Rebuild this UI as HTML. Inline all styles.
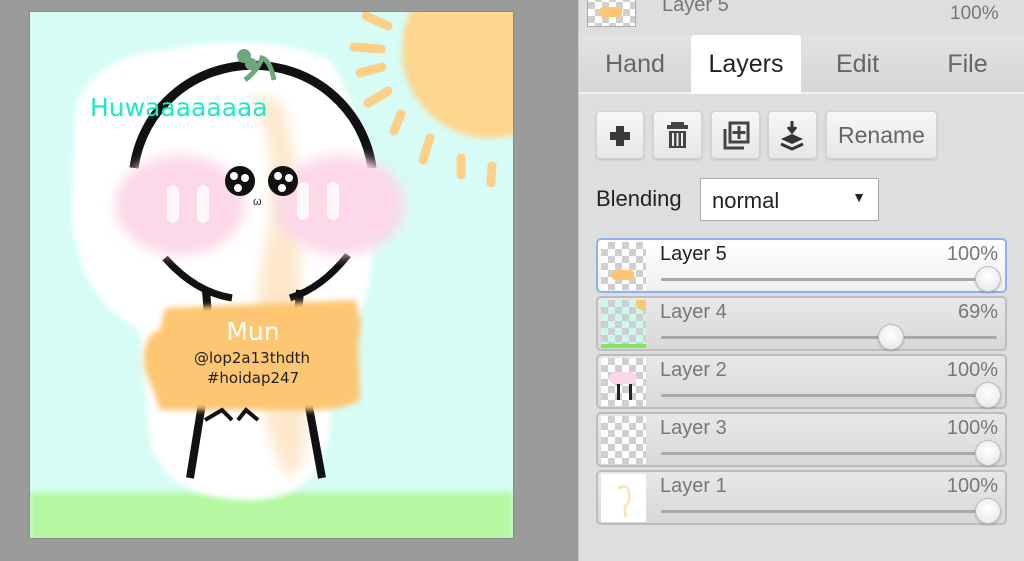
<!DOCTYPE html>
<html><head><meta charset="utf-8"><style>
*{box-sizing:border-box;margin:0;padding:0}
body{width:1024px;height:561px;overflow:hidden;background:#9b9b9b;font-family:"Liberation Sans",Arial,sans-serif;position:relative}
#panel{position:absolute;left:578px;top:0;width:446px;height:561px;background:#dedede;border-left:1px solid #c8c8c8}
.abs{position:absolute}
.chk{background-color:#fff;background-image:linear-gradient(45deg,#cfcfcf 25%,transparent 25%,transparent 75%,#cfcfcf 75%),linear-gradient(45deg,#cfcfcf 25%,transparent 25%,transparent 75%,#cfcfcf 75%);background-size:14px 14px;background-position:0 0,7px 7px}
.tab{position:absolute;top:35px;height:58px;font-size:25px;color:#666;line-height:58px;text-align:center}
.btn{position:absolute;top:111px;height:48px;background:linear-gradient(#f7f7f7,#e6e6e6);border:1px solid #d2d2d2;border-radius:4px;box-shadow:0 1px 2px rgba(0,0,0,.15)}
.row{position:absolute;left:596px;width:411px;height:55px;border:2px solid #bdbdbd;border-radius:5px;background:linear-gradient(#e8e8e8,#d8d8d8)}
.row .th{position:absolute;left:3px;top:2px;width:45px;height:48px}
.row .nm{position:absolute;left:62px;top:3px;font-size:20px;color:#777}
.row .pc{position:absolute;right:7px;top:3px;font-size:20px;color:#777}
.row .ln{position:absolute;left:63px;right:8px;top:38px;height:3px;background:#a8a8a8;border-radius:2px}
.row .kn{position:absolute;top:26px;width:26px;height:26px;border-radius:50%;background:radial-gradient(circle at 50% 40%,#fff,#e4e4e4);border:1px solid #bbb;box-shadow:0 1px 2px rgba(0,0,0,.2)}
</style></head><body>
<svg class="abs" style="left:0;top:0" width="578" height="561">
<defs>
<filter id="b3"><feGaussianBlur stdDeviation="3"/></filter>
<filter id="b6"><feGaussianBlur stdDeviation="6"/></filter>
<clipPath id="cv"><rect x="30" y="12" width="483" height="526"/></clipPath>
</defs>
<rect x="29" y="11" width="485" height="528" fill="#8a8a8a"/>
<g clip-path="url(#cv)">
<rect x="30" y="12" width="483" height="526" fill="#d6fcf5"/>
<rect x="30" y="492" width="483" height="50" fill="#b6f7a1" filter="url(#b3)"/>
<circle cx="490" cy="50" r="88" fill="#fdd68f" filter="url(#b3)"/>
<g stroke="#fdd08a" stroke-width="9" stroke-linecap="round">
<line x1="366" y1="16" x2="388" y2="26"/><line x1="354" y1="47" x2="381" y2="49"/>
<line x1="360" y1="73" x2="382" y2="67"/><line x1="368" y1="103" x2="388" y2="91"/>
<line x1="394" y1="131" x2="401" y2="114"/><line x1="423" y1="160" x2="430" y2="138"/>
<line x1="461" y1="175" x2="461" y2="158"/><line x1="491" y1="183" x2="492" y2="166"/>
</g>
<path d="M75 110 Q90 55 170 50 Q260 30 330 60 Q370 120 372 250 Q370 330 335 320 L330 430 Q320 500 250 500 Q165 500 150 440 L140 330 Q80 300 72 220 Z" fill="#fff" filter="url(#b3)"/>
<path d="M248 95 Q262 110 268 140 Q278 200 262 260 Q250 330 262 400 Q275 470 290 475 Q310 470 305 400 Q300 320 300 240 Q300 150 280 100 Z" fill="#fde8cc" filter="url(#b6)"/>
<path d="M134 168 A120 118 0 0 1 372 168" fill="none" stroke="#111" stroke-width="9"/>
<path d="M165 258 Q195 292 232 298 M290 298 Q322 288 348 255" fill="none" stroke="#111" stroke-width="7"/>
<path d="M245 80 Q258 70 262 58 Q270 60 274 80" fill="none" stroke="#6ea77a" stroke-width="5"/>
<circle cx="244" cy="56" r="7" fill="#6ea77a"/><circle cx="251" cy="64" r="6" fill="#6ea77a"/>
<ellipse cx="180" cy="205" rx="65" ry="50" fill="#fcd8e8" filter="url(#b6)"/>
<ellipse cx="340" cy="205" rx="65" ry="50" fill="#fcd8e8" filter="url(#b6)"/>
<g fill="#fff" opacity=".8"><rect x="167" y="185" width="12" height="38" rx="6"/><rect x="197" y="185" width="12" height="38" rx="6"/><rect x="297" y="182" width="12" height="38" rx="6"/><rect x="327" y="182" width="12" height="38" rx="6"/></g>
<circle cx="240" cy="181" r="15" fill="#111"/><circle cx="283" cy="181" r="15" fill="#111"/>
<g fill="#fff"><circle cx="234" cy="176" r="4"/><circle cx="245" cy="178" r="4"/><circle cx="238" cy="188" r="4"/><circle cx="278" cy="176" r="4"/><circle cx="289" cy="178" r="4"/><circle cx="282" cy="188" r="4"/></g>
<text x="253" y="205" font-size="11" fill="#222" font-family="Liberation Sans">ω</text>
<line x1="206" y1="290" x2="208" y2="315" stroke="#111" stroke-width="8"/><line x1="300" y1="290" x2="298" y2="315" stroke="#111" stroke-width="8"/>
<line x1="205" y1="385" x2="190" y2="478" stroke="#111" stroke-width="8"/><line x1="305" y1="385" x2="322" y2="478" stroke="#111" stroke-width="8"/>
<path d="M165 308 L355 300 Q365 330 358 340 L360 400 Q340 412 300 410 L160 410 Q150 380 145 372 Q140 335 160 330 Z" fill="#fdc672" filter="url(#b3)"/>
<path d="M205 420 L222 410 L232 420 M238 420 L246 410 L258 420" fill="none" stroke="#111" stroke-width="4"/>
<text x="253" y="340" text-anchor="middle" font-size="25" fill="#fff" font-family="DejaVu Sans">Mun</text>
<text x="252" y="363" text-anchor="middle" font-size="15" fill="#222" font-family="DejaVu Sans">@lop2a13thdth</text>
<text x="253" y="383" text-anchor="middle" font-size="15" fill="#222" font-family="DejaVu Sans">#hoidap247</text>
<text x="90" y="116" font-size="25" fill="#1ee8c8" font-family="DejaVu Sans">Huwaaaaaaaa</text>
</g>
</svg>
<div id="panel"></div>
<div class="abs chk" style="left:587px;top:-20px;width:49px;height:47px;border:1px solid #aaa"><div style="position:absolute;left:12px;top:26px;width:22px;height:10px;background:#fdc672;border-radius:3px"></div></div>
<div class="abs" style="left:662px;top:-6px;font-size:20px;color:#777">Layer 5</div>
<div class="abs" style="left:950px;top:3px;font-size:19px;color:#777">100%</div>
<div class="abs" style="left:579px;top:35px;width:445px;height:58px;background:linear-gradient(#e2e2e2,#d6d6d6)"></div>
<div class="abs" style="left:579px;top:92px;width:445px;height:2px;background:#f4f4f4"></div>
<div class="tab" style="left:590px;width:90px">Hand</div>
<div class="tab" style="left:691px;width:110px;background:#fff;border-radius:4px 4px 0 0;color:#222;height:59px">Layers</div>
<div class="tab" style="left:815px;width:85px">Edit</div>
<div class="tab" style="left:925px;width:85px">File</div>
<div class="btn" style="left:596px;width:48px"><svg width="46" height="46"><path d="M19 14h8v6h6v8h-6v6h-8v-6h-6v-8h6z" fill="#3a3a3a"/></svg></div>
<div class="btn" style="left:653px;width:49px"><svg width="47" height="46"><rect x="17" y="10" width="13" height="3" fill="#444"/><rect x="13" y="13" width="21" height="4" fill="#444"/><path d="M15 19h17v17H15z" fill="#444"/><path d="M19 21v13M23.5 21v13M28 21v13" stroke="#eee" stroke-width="2"/></svg></div>
<div class="btn" style="left:711px;width:49px"><svg width="47" height="46"><path d="M13 17v19h19" fill="none" stroke="#444" stroke-width="3"/><rect x="18" y="11" width="18" height="19" fill="none" stroke="#444" stroke-width="3"/><path d="M27 14v13M20.5 20.5h13" stroke="#444" stroke-width="3"/></svg></div>
<div class="btn" style="left:768px;width:49px"><svg width="47" height="46"><path d="M23 9v9M19 15l4 5 4-5" stroke="#333" stroke-width="3" fill="none"/><path d="M12 27l11-5 11 5-11 5z" fill="#333"/><path d="M12 32l11 5 11-5" stroke="#333" stroke-width="3" fill="none"/></svg></div>
<div class="btn" style="left:826px;width:111px;font-size:23px;color:#666;line-height:46px;text-align:center">Rename</div>
<div class="abs" style="left:596px;top:186px;font-size:22px;color:#222">Blending</div>
<div class="abs" style="left:700px;top:178px;width:179px;height:43px;background:#fff;border:1px solid #aaa;font-size:22px;color:#222;padding:9px 0 0 11px">normal<span style="position:absolute;right:12px;top:10px;font-size:14px">▼</span></div>
<div class="row" style="top:238px;border-color:#8fb0e8;background:linear-gradient(#fff,#f0f0f0)"><div class="th chk"><div style="position:absolute;left:11px;top:28px;width:22px;height:10px;background:#fdc672;border-radius:3px"></div></div><div class="nm" style="color:#222">Layer 5</div><div class="pc">100%</div><div class="ln"></div><div class="kn" style="left:377px"></div></div>
<div class="row" style="top:296px"><div class="th chk" style="background-color:#c8f8ef"><div style="position:absolute;left:0;bottom:0;width:45px;height:4px;background:#7ee860"></div><div style="position:absolute;right:0;top:0;width:10px;height:10px;background:#fdc672;border-radius:0 0 0 6px"></div></div><div class="nm">Layer 4</div><div class="pc">69%</div><div class="ln"></div><div class="kn" style="left:280px"></div></div>
<div class="row" style="top:354px"><div class="th chk"><div style="position:absolute;left:8px;top:14px;width:28px;height:12px;background:#f8d8e8;border-radius:6px"></div><div style="position:absolute;left:16px;top:26px;width:3px;height:16px;background:#222"></div><div style="position:absolute;left:28px;top:26px;width:3px;height:16px;background:#222"></div></div><div class="nm">Layer 2</div><div class="pc">100%</div><div class="ln"></div><div class="kn" style="left:377px"></div></div>
<div class="row" style="top:412px"><div class="th chk"></div><div class="nm">Layer 3</div><div class="pc">100%</div><div class="ln"></div><div class="kn" style="left:377px"></div></div>
<div class="row" style="top:470px"><div class="th" style="background:#fff"><svg width="45" height="48"><path d="M17 14q10-5 11 5t-3 12q-2 6 0 12" fill="none" stroke="#fde5c4" stroke-width="3"/></svg></div><div class="nm">Layer 1</div><div class="pc">100%</div><div class="ln"></div><div class="kn" style="left:377px"></div></div>
</body></html>
